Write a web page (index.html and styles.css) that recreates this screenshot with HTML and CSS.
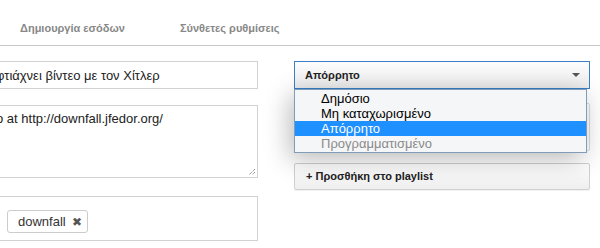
FILE: index.html
```html
<!DOCTYPE html>
<html lang="el">
<head>
<meta charset="utf-8">
<title>Video</title>
<link rel="stylesheet" href="styles.css">
</head>
<body>
<div class="tabs">
  <div class="tab">Δημιουργία εσόδων</div>
  <div class="tab">Σύνθετες ρυθμίσεις</div>
</div>
<div class="main">
  <div class="left">
    <div class="field title"><span class="val">φτιάχνει βίντεο με τον Χίτλερ</span></div>
    <div class="field desc"><span class="val">o at http://downfall.jfedor.org/</span>
      <svg class="grip" width="8" height="8" viewBox="0 0 8 8"><path d="M7 1 L1 7 M7 4 L4 7" stroke="#666" stroke-width="1" stroke-dasharray="1 1"/></svg>
    </div>
    <div class="field tags"><span class="chip">downfall <span class="x">✖</span></span></div>
  </div>
  <div class="right">
    <div class="combo">
      <div class="select"><span>Απόρρητο</span><span class="arrow"></span></div>
      <ul class="list">
        <li>Δημόσιο</li>
        <li>Μη καταχωρισμένο</li>
        <li class="sel">Απόρρητο</li>
        <li class="dis">Προγραμματισμένο</li>
      </ul>
    </div>
    <div class="behind"></div>
    <div class="btn">+ Προσθήκη στο playlist</div>
  </div>
</div>
</body>
</html>
```
FILE: styles.css
```css
html, body { margin: 0; padding: 0; }
body {
  width: 600px; height: 248px; overflow: hidden; background: #fff;
  font-family: "Liberation Sans", Arial, sans-serif; color: #222;
}
.tabs {
  display: flex; gap: 55px; height: 46px; box-sizing: border-box;
  padding: 22px 0 0 20px; border-bottom: 1px solid #c8c8c8;
}
.tab { font-size: 11px; font-weight: bold; color: #888; line-height: 13px; }
.main { display: flex; padding-top: 15px; }
.left { margin-left: -20px; width: 278px; display: flex; flex-direction: column; }
.field { border: 1px solid #d2d2d2; box-sizing: border-box; background: #fff; font-size: 13px; position: relative; }
.title { height: 28px; padding: 6px 0 0 15px; line-height: 15px; }
.desc { height: 73px; margin-top: 16px; padding: 5px 0 0 15px; line-height: 15px; }
.grip { position: absolute; right: 1px; bottom: 1px; }
.tags { height: 45px; margin-top: 18px; padding: 13px 0 0 26px; }
.chip {
  display: inline-flex; align-items: center; gap: 6px; height: 23px; box-sizing: border-box;
  padding: 0 5px 0 10px; border: 1px solid #ccc; border-radius: 3px; font-size: 13px; color: #333;
}
.x { font-size: 12px; color: #555; }
.right { margin-left: 36px; width: 296px; position: relative; }
.combo { position: relative; z-index: 2; }
.select {
  height: 28px; box-sizing: border-box; border: 1px solid #3a7fc8;
  background: linear-gradient(#fdfdfd, #ececec);
  display: flex; align-items: center; justify-content: space-between;
  padding: 0 9px 0 10px; font-size: 11px; font-weight: bold; color: #222;
}
.arrow { width: 0; height: 0; border-left: 4px solid transparent; border-right: 4px solid transparent; border-top: 4px solid #555; }
.list {
  position: absolute; left: 0; top: 28px; width: 293px; box-sizing: border-box;
  margin: 0; padding: 1px 0 1px; list-style: none;
  border: 1px solid #7f9db9; background: #f5f6f7;
  box-shadow: -4px 6px 26px rgba(0,0,0,0.28);
  font-size: 13px; line-height: 15px;
}
.list li { padding-left: 26px; color: #000; }
.list li.sel { background: #1e90ff; color: #fff; }
.list li.dis { color: #8a8a8a; }
.behind { height: 48px; margin-top: 14px; box-sizing: border-box; border: 1px solid #ddd; border-radius: 2px; }
.btn {
  height: 27px; margin-top: 12px; box-sizing: border-box;
  border: 1px solid #d0d0d0; border-radius: 2px;
  background: linear-gradient(#fff, #efefef); box-shadow: 0 1px 1px rgba(0,0,0,0.06);
  padding-left: 11px; font-size: 11px; font-weight: bold; color: #222; line-height: 25px;
}
```
